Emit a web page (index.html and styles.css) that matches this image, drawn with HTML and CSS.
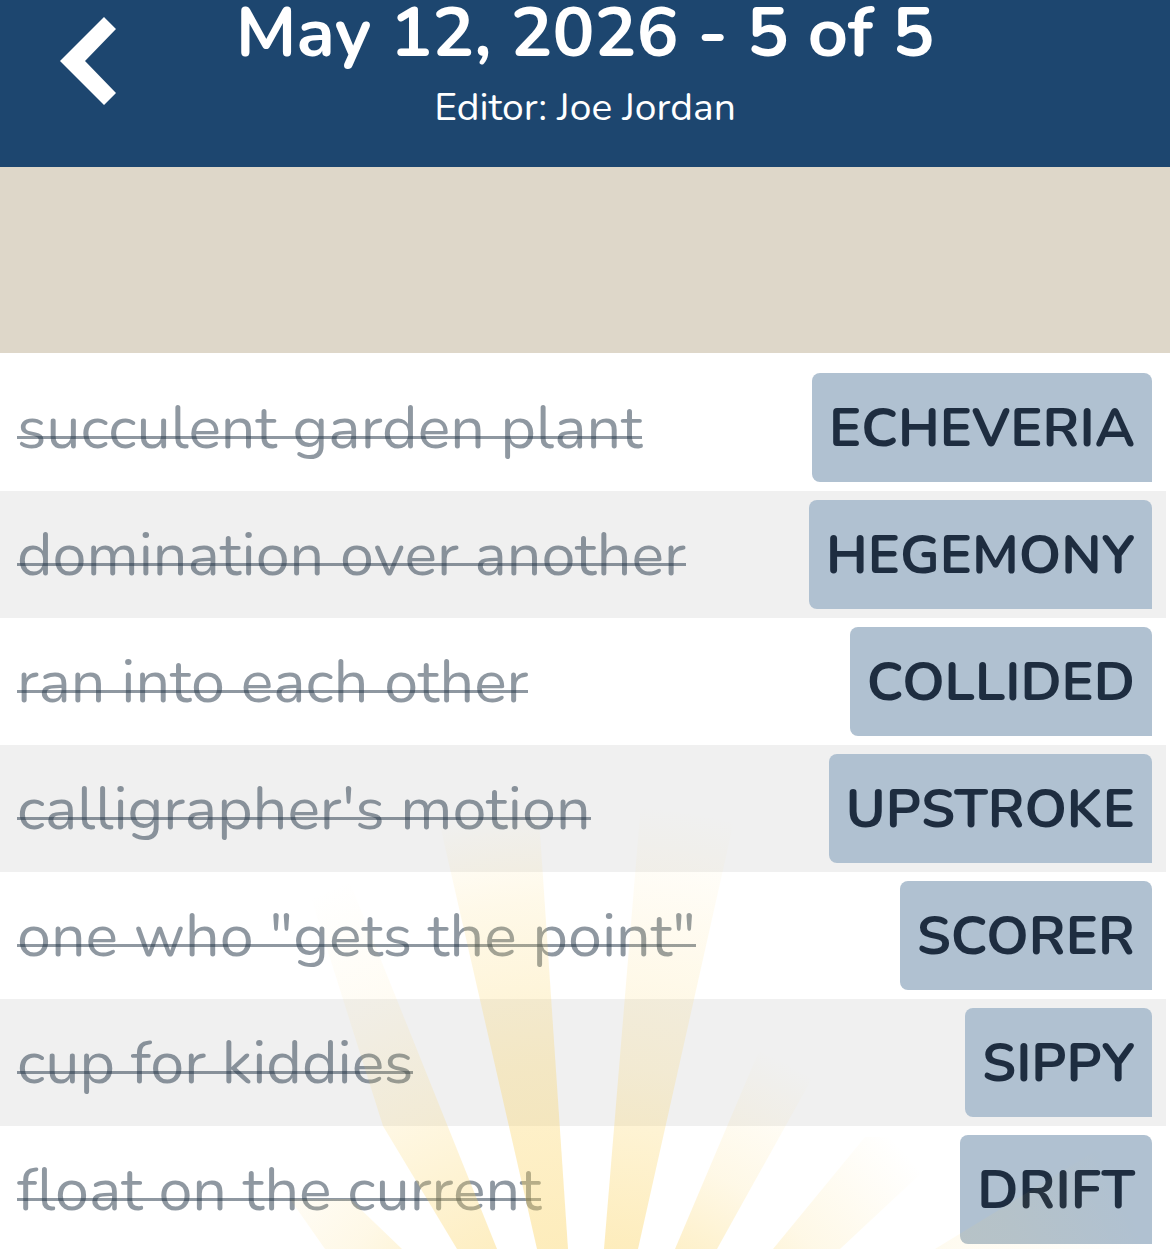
FILE: index.html
```
<!DOCTYPE html>
<html lang="en">
<head>
  <meta charset="utf-8">
  <meta name="viewport" content="width=device-width, initial-scale=1">
  <title>May 12, 2026 - 5 of 5</title>
  <link rel="stylesheet" href="styles.css">
</head>
<body>

  <header class="topbar">
    <button class="back" type="button" aria-label="Back">
      <svg width="58" height="90" viewBox="0 0 58 90">
        <path d="M44 1 L56 13 L25 45 L56 77 L44 89 L0 45 Z" fill="#fff"/>
      </svg>
    </button>
    <div class="heading">
      <h1 class="title">May 12, 2026 - 5 of 5</h1>
      <p class="editor">Editor: Joe Jordan</p>
    </div>
  </header>

  <div class="banner"></div>

  <main class="puzzle">
    <ul class="clues">
      <li class="row"><s class="clue">succulent garden plant</s><span class="answer">ECHEVERIA</span></li>
      <li class="row"><s class="clue">domination over another</s><span class="answer">HEGEMONY</span></li>
      <li class="row"><s class="clue">ran into each other</s><span class="answer">COLLIDED</span></li>
      <li class="row"><s class="clue">calligrapher's motion</s><span class="answer">UPSTROKE</span></li>
      <li class="row"><s class="clue">one who "gets the point"</s><span class="answer">SCORER</span></li>
      <li class="row"><s class="clue">cup for kiddies</s><span class="answer">SIPPY</span></li>
      <li class="row"><s class="clue">float on the current</s><span class="answer">DRIFT</span></li>
    </ul>

    <!-- sun rays over the list -->
    <svg class="rays" viewBox="0 0 1170 896" preserveAspectRatio="xMidYMin slice" aria-hidden="true">
      <defs>
        <radialGradient id="strong" gradientUnits="userSpaceOnUse" cx="584" cy="1100" r="650">
          <stop offset="0.3" stop-color="#fbd25c" stop-opacity="0.42"/>
          <stop offset="0.6" stop-color="#fbd25c" stop-opacity="0.3"/>
          <stop offset="0.85" stop-color="#fbd25c" stop-opacity="0.14"/>
          <stop offset="1" stop-color="#fbd25c" stop-opacity="0"/>
        </radialGradient>
        <radialGradient id="soft" gradientUnits="userSpaceOnUse" cx="584" cy="1100" r="650">
          <stop offset="0.3" stop-color="#fbd25c" stop-opacity="0.42"/>
          <stop offset="0.6" stop-color="#fbd25c" stop-opacity="0.2"/>
          <stop offset="0.85" stop-color="#fbd25c" stop-opacity="0.08"/>
          <stop offset="1" stop-color="#fbd25c" stop-opacity="0"/>
        </radialGradient>
        <radialGradient id="side" gradientUnits="userSpaceOnUse" cx="584" cy="1100" r="620">
          <stop offset="0.35" stop-color="#fbd25c" stop-opacity="0.38"/>
          <stop offset="0.6" stop-color="#fbd25c" stop-opacity="0.18"/>
          <stop offset="0.8" stop-color="#fbd25c" stop-opacity="0.07"/>
          <stop offset="1" stop-color="#fbd25c" stop-opacity="0"/>
        </radialGradient>
        <radialGradient id="low" gradientUnits="userSpaceOnUse" cx="584" cy="1100" r="440">
          <stop offset="0.45" stop-color="#fbd25c" stop-opacity="0.38"/>
          <stop offset="0.7" stop-color="#fbd25c" stop-opacity="0.15"/>
          <stop offset="1" stop-color="#fbd25c" stop-opacity="0"/>
        </radialGradient>
        <radialGradient id="edge" gradientUnits="userSpaceOnUse" cx="584" cy="1100" r="600">
          <stop offset="0.45" stop-color="#fbd25c" stop-opacity="0.14"/>
          <stop offset="0.8" stop-color="#fbd25c" stop-opacity="0.07"/>
          <stop offset="1" stop-color="#fbd25c" stop-opacity="0"/>
        </radialGradient>
      </defs>
      <path d="M435 450 L538 450 L568 896 L537 896 Z" fill="url(#strong)"/>
      <path d="M641 450 L738 450 L638 896 L604 896 Z" fill="url(#soft)"/>
      <path d="M300 510 L342 510 L497 896 L457 896 L383 773 Z" fill="url(#side)"/>
      <path d="M675 896 L762 691 L815 720 L717 896 Z" fill="url(#low)"/>
      <path d="M773 896 L865 784 L960 784 L840 896 Z" fill="url(#low)"/>
      <path d="M290 846 L350 846 L402 896 L325 896 Z" fill="url(#low)"/>
      <path d="M935 896 L1100 795 L1152 840 L1152 896 Z" fill="url(#edge)"/>
    </svg>
  </main>

</body>
</html>
```
FILE: styles.css
```
* {
  box-sizing: border-box;
  margin: 0;
  padding: 0;
}

body {
  display: flex;
  flex-direction: column;
  height: 100vh;
  overflow: hidden;
  background: #fff;
  color: #1e2d40;
  font-family: "Nunito", "Open Sans", sans-serif;
}

/* header */
.topbar {
  display: grid;
  grid-template-columns: 120px 1fr 120px;
  align-items: start;
  flex-shrink: 0;
  padding-bottom: 35px;
  background: #1d466f;
  color: #fff;
}

.back {
  padding: 16px 0 0 60px;
  border: 0;
  background: none;
  cursor: pointer;
}

.back svg {
  display: block;
}

.heading {
  text-align: center;
}

.title {
  font-size: 70px;
  font-weight: 700;
  line-height: 66px;
  white-space: nowrap;
}

.editor {
  padding-top: 18px;
  font-size: 39px;
  line-height: 48px;
}

.banner {
  flex-shrink: 0;
  height: 186px;
  background: #ded7c9;
}

/* clue list */
.puzzle {
  position: relative;
  flex: 1;
  overflow: hidden;
}

.clues {
  padding: 11px 4px 0 0;
  list-style: none;
}

.row {
  display: flex;
  align-items: center;
  justify-content: space-between;
  padding: 9px 14px 9px 17px;
}

.row:nth-child(even) {
  background: #f0f0f0;
}

.clue,
.answer {
  padding-top: 2px;
  line-height: 107px;
}

/* the strike sits lower than the default line-through */
.clue {
  background: linear-gradient(rgba(32, 50, 68, 0.5), rgba(32, 50, 68, 0.5)) 0 63px / 100% 3px no-repeat;
  color: rgba(32, 50, 68, 0.5);
  font-size: 61px;
  text-decoration: none;
}

.answer {
  padding-left: 17px;
  padding-right: 17px;
  border-radius: 8px 8px 0 8px;
  background: #b0c1d1;
  font-size: 54px;
  font-weight: 700;
}

.rays {
  position: absolute;
  top: 0;
  left: 0;
  width: 100%;
  height: 100%;
  pointer-events: none;
}
```
